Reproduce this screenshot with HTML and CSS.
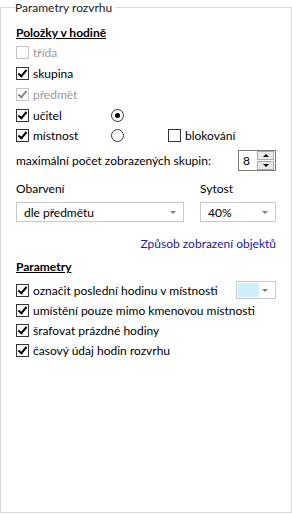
FILE: index.html
```html
<!DOCTYPE html>
<html>

<head>
    <title>Parametry rozvrhu</title>
    <link rel="stylesheet" href="styles.css">
</head>

<body>
    <fieldset class="panel">
        <legend>Parametry rozvrhu</legend>

        <div class="title first">Položky v hodině</div>

        <div class="items">
            <div class="chk disabled"><span class="box"></span>třída</div>
            <div></div>
            <div></div>

            <div class="chk"><span class="box on"></span>skupina</div>
            <div></div>
            <div></div>

            <div class="chk disabled"><span class="box on"></span>předmět</div>
            <div></div>
            <div></div>

            <div class="chk"><span class="box on"></span>učitel</div>
            <div><span class="radio on"></span></div>
            <div></div>

            <div class="chk short"><span class="box on"></span>místnost</div>
            <div class="short"><span class="radio"></span></div>
            <div class="chk short"><span class="box"></span>blokování</div>
        </div>

        <div class="max-row">
            <span>maximální počet zobrazených skupin:</span>
            <div class="spin">
                <span class="spin-value">8</span>
                <div class="spin-buttons">
                    <span class="spin-btn up"></span>
                    <span class="spin-btn down"></span>
                </div>
            </div>
        </div>

        <div class="combo-row">
            <div class="combo-col wide">
                <div class="combo-label">Obarvení</div>
                <div class="combo"><span>dle předmětu</span><span class="arrow"></span></div>
            </div>
            <div class="combo-col narrow">
                <div class="combo-label">Sytost</div>
                <div class="combo"><span>40%</span><span class="arrow"></span></div>
            </div>
        </div>

        <div class="link-row"><a href="#">Způsob zobrazení objektů</a></div>

        <div class="title">Parametry</div>

        <div class="params">
            <div class="chk param"><span class="box on"></span>označit poslední hodinu v místnosti
                <div class="color-combo"><span class="swatch"></span><span class="arrow"></span></div>
            </div>
            <div class="chk param"><span class="box on"></span>umístění pouze mimo kmenovou místnosti</div>
            <div class="chk param"><span class="box on"></span>šrafovat prázdné hodiny</div>
            <div class="chk param"><span class="box on"></span>časový údaj hodin rozvrhu</div>
        </div>
    </fieldset>
</body>

</html>
```

FILE: styles.css
```css
body {
    margin: 0;
    background: #ffffff;
    font-family: Lato, "Noto Sans", sans-serif;
    font-size: 12px;
    color: #000000;
}

.panel {
    margin: 0;
    padding: 0 15px 0 15px;
    width: 292px;
    height: 513px;
    box-sizing: border-box;
    border: 1px solid #dadada;
}

.panel legend {
    margin-left: -1px;
    padding: 0 3px 0 0;
    line-height: 15px;
    color: #222222;
}

.title {
    font-weight: bold;
    text-decoration: underline;
    line-height: 16px;
    margin-top: 6px;
}

.title.first {
    margin-top: 10px;
}

/* checkboxes */
.chk {
    display: flex;
    align-items: center;
    height: 21px;
}

.chk.disabled {
    color: #9a9a9a;
}

.box {
    width: 11px;
    height: 11px;
    border: 1px solid #333333;
    margin-right: 4px;
    position: relative;
    flex: none;
}

.chk.disabled .box {
    border-color: #c4c4c4;
}

.box.on::after {
    content: "";
    position: absolute;
    left: 3px;
    top: 0px;
    width: 3px;
    height: 7px;
    border: solid #000000;
    border-width: 0 2px 2px 0;
    transform: rotate(40deg);
}

.chk.disabled .box.on::after {
    border-color: #8a8a8a;
}

.radio {
    display: block;
    width: 11px;
    height: 11px;
    border: 1px solid #333333;
    border-radius: 50%;
    position: relative;
}

.radio.on::after {
    content: "";
    position: absolute;
    left: 3px;
    top: 3px;
    width: 5px;
    height: 5px;
    border-radius: 50%;
    background: #000000;
}

.items {
    display: grid;
    grid-template-columns: 95px 57px auto;
    margin-top: 1px;
}

.items > div {
    display: flex;
    align-items: center;
    height: 21px;
}

.items > .short {
    height: 18px;
}

/* spin box */
.max-row {
    display: flex;
    align-items: center;
    justify-content: space-between;
    margin-top: 6px;
    height: 21px;
}

.spin {
    display: flex;
    align-items: center;
    width: 38px;
    height: 21px;
    box-sizing: border-box;
    border: 1px solid #7a7a7a;
    padding: 0 1px 0 4px;
}

.spin-value {
    flex: 1;
}

.spin-buttons {
    display: flex;
    flex-direction: column;
    gap: 1px;
}

.spin-btn {
    display: block;
    width: 15px;
    height: 7px;
    border: 1px solid #acacac;
    background: #e8e8e8;
    position: relative;
}

.spin-btn::after {
    content: "";
    position: absolute;
    left: 5px;
    border-left: 3px solid transparent;
    border-right: 3px solid transparent;
}

.spin-btn.up::after {
    top: 2px;
    border-bottom: 3px solid #000000;
}

.spin-btn.down::after {
    top: 2px;
    border-top: 3px solid #000000;
}

/* combos */
.combo-row {
    display: flex;
    justify-content: space-between;
    margin-top: 10px;
}

.combo-col.wide {
    width: 168px;
}

.combo-col.narrow {
    width: 76px;
}

.combo-label {
    line-height: 16px;
    margin-bottom: 5px;
}

.combo {
    display: flex;
    align-items: center;
    justify-content: space-between;
    height: 20px;
    box-sizing: border-box;
    border: 1px solid #c8c8c8;
    padding: 0 7px 0 7px;
}

.arrow {
    width: 0;
    height: 0;
    border-left: 3px solid transparent;
    border-right: 3px solid transparent;
    border-top: 3px solid #7f7f7f;
}

.link-row {
    display: flex;
    justify-content: flex-end;
    height: 20px;
    align-items: center;
    margin-top: 11px;
}

.link-row a {
    color: #20209a;
    text-decoration: none;
}

/* parametry */
.params {
    margin-top: 5px;
}

.chk.param {
    height: 20px;
}

.color-combo {
    display: flex;
    align-items: center;
    justify-content: space-between;
    margin-left: auto;
    width: 40px;
    height: 18px;
    box-sizing: border-box;
    border: 1px solid #c8c8c8;
    padding: 0 7px 0 1px;
}

.swatch {
    width: 21px;
    height: 14px;
    background: #cdeefa;
}
```
